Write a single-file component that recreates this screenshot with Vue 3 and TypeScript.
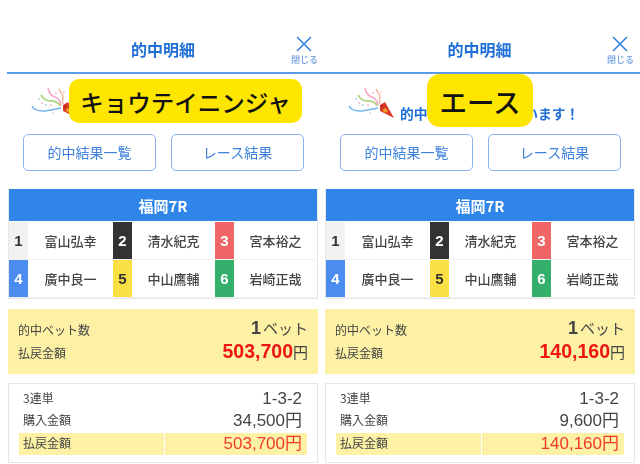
<script setup lang="ts">
interface IRacer {
  no: number
  name: string
}

interface IPanel {
  label: string
  labelClass: string
  stake: string
  payout: string
}

const racers: IRacer[] = [
  { no: 1, name: '富山弘幸' },
  { no: 2, name: '清水紀克' },
  { no: 3, name: '宮本裕之' },
  { no: 4, name: '廣中良一' },
  { no: 5, name: '中山鷹輔' },
  { no: 6, name: '岩崎正哉' },
]

const panels: IPanel[] = [
  { label: 'キョウテイニンジャ', labelClass: 'label-wide', stake: '34,500', payout: '503,700' },
  { label: 'エース', labelClass: 'label-short', stake: '9,600', payout: '140,160' },
]
</script>

<template>
  <div class="page">
    <section v-for="panel in panels" :key="panel.label" class="panel">
      <header class="top">
        <h1 class="title">的中明細</h1>
        <div class="close">
          <svg width="16" height="16" viewBox="0 0 16 16">
            <path d="M1 1 15 15M15 1 1 15" stroke="#2f7fe0" stroke-width="1.5" fill="none" />
          </svg>
          <span>閉じる</span>
        </div>
      </header>

      <div class="congrats">
        <svg class="popper" width="56" height="38" viewBox="0 0 56 38">
          <path d="M5 22c2 4 6 5 11 5s12-2 18-3" stroke="#72b4ee" stroke-width="1.6" fill="none" />
          <path d="M14 11c2 4 5 6 10 6s7 2 10 5" stroke="#b4d88a" stroke-width="1.8" fill="none" />
          <path d="M21 4c1 5 3 8 7 9s5 4 6 8" stroke="#f4a6c6" stroke-width="1.6" fill="none" />
          <path d="M32 5c1 3 4 5 4 8s-1 4 0 7" stroke="#f3b49a" stroke-width="1.4" fill="none" />
          <g fill="#f2b0c4">
            <circle cx="15" cy="19" r="0.9" />
            <circle cx="24" cy="21" r="0.9" />
            <circle cx="29" cy="9" r="0.9" />
            <circle cx="37" cy="8" r="0.8" />
          </g>
          <g fill="#9fd0ee">
            <circle cx="12" cy="15" r="0.9" />
            <circle cx="19" cy="21" r="0.9" />
            <circle cx="26" cy="29" r="0.8" />
          </g>
          <path d="M36 21 41 18 50 34 36 27Z" fill="#dc3a26" />
          <path d="M40 24 44 26 42 29 39 27Z" fill="#f0a030" />
          <path d="M37 22 39 21 38 25Z" fill="#a81e1e" />
        </svg>
        <span class="congrats-text">的中おめでとうございます！</span>
      </div>

      <div class="actions">
        <button class="link-button">的中結果一覧</button>
        <button class="link-button">レース結果</button>
      </div>

      <div class="race">
        <div class="race-head">福岡7R</div>
        <div class="racers">
          <div v-for="racer in racers" :key="racer.no" class="racer">
            <span :class="['num', `num-${racer.no}`]">{{ racer.no }}</span>
            <span class="name">{{ racer.name }}</span>
          </div>
        </div>
      </div>

      <div class="summary">
        <div class="row">
          <span>的中ベット数</span>
          <span class="big"><b class="count">1</b>ベット</span>
        </div>
        <div class="row">
          <span>払戻金額</span>
          <span class="big"><b class="red">{{ panel.payout }}</b>円</span>
        </div>
      </div>

      <div class="detail">
        <div class="line">
          <span class="line-name">3連単</span>
          <span class="value">1-3-2</span>
        </div>
        <div class="line">
          <span class="line-name">購入金額</span>
          <span class="value">{{ panel.stake }}円</span>
        </div>
        <div class="line hit">
          <span class="hit-name">払戻金額</span>
          <span class="value">{{ panel.payout }}円</span>
        </div>
      </div>

      <div :class="['label', panel.labelClass]">{{ panel.label }}</div>
    </section>
  </div>
</template>

<style>
html,
body {
  margin: 0;
  background: #fff;
}
</style>

<style scoped>
.page {
  display: grid;
  grid-template-columns: 317px 323px;
  width: 640px;
  height: 464px;
  overflow: hidden;
  font-family: 'Noto Sans CJK JP', 'Liberation Sans', sans-serif;
  color: #444;
}

.panel {
  position: relative;
  width: 310px;
  padding-left: 8px;
}

.top,
.congrats,
.actions,
.race,
.summary,
.detail {
  filter: blur(0.4px);
}

.top {
  position: relative;
  height: 74px;
  margin-left: -1px;
  width: 312px;
  box-sizing: border-box;
  border-bottom: 2px solid #5b9be8;
  display: flex;
  justify-content: center;
}

.panel:last-child .top {
  margin-left: -6px;
  width: 321px;
}

.title {
  margin: 38px 0 0;
  font-size: 16px;
  line-height: 22px;
  font-weight: 700;
  color: #1f6fd6;
}

.close {
  position: absolute;
  right: 1px;
  top: 36px;
  display: flex;
  flex-direction: column;
  align-items: center;
  font-size: 9px;
  line-height: 11px;
  font-weight: 500;
  color: #6f9fdc;
}

.panel:last-child .close {
  right: 6px;
}

.close span {
  margin-top: 2px;
}

.congrats {
  height: 60px;
  display: flex;
  align-items: flex-start;
  padding-left: 19px;
}

.popper {
  margin-top: 10px;
  flex: none;
}

.congrats-text {
  margin-top: 29px;
  font-size: 13.8px;
  line-height: 20px;
  font-weight: 700;
  color: #1f6fd6;
  white-space: nowrap;
}

.actions {
  display: flex;
  gap: 15px;
  padding-left: 15px;
}

.link-button {
  width: 133px;
  height: 37px;
  padding: 0 0 2px;
  box-sizing: border-box;
  background: #fff;
  border: 1.5px solid #8ab4ee;
  border-radius: 5px;
  font: inherit;
  font-size: 14px;
  color: #3f82dc;
}

.race {
  margin-top: 18px;
  border: 1px solid #e6e6e6;
  border-top: 0;
}

.race-head {
  height: 32px;
  background: #2f85e8;
  color: #fff;
  font-size: 15px;
  font-weight: 700;
  line-height: 34px;
  text-align: center;
}

.racers {
  display: grid;
  grid-template-columns: 104px 102px 1fr;
  grid-auto-rows: 38px;
  padding-top: 1px;
}

.racer {
  display: flex;
  align-items: stretch;
  border-bottom: 1px solid #f1f1f1;
}

.num {
  flex: none;
  width: 19px;
  text-align: center;
  font-size: 15px;
  line-height: 38px;
  font-weight: 700;
  font-family: 'Liberation Sans', sans-serif;
  color: #fff;
}

.num-1 {
  background: #f2f2f2;
  color: #333;
}

.num-2 {
  background: #333;
}

.num-3 {
  background: #f06565;
}

.num-4 {
  background: #4a8cf0;
}

.num-5 {
  background: #fae044;
  color: #333;
}

.num-6 {
  background: #35b06c;
}

.name {
  flex: 1;
  text-align: center;
  font-size: 13px;
  line-height: 38px;
  font-weight: 500;
}

.summary {
  margin-top: 10px;
  height: 65px;
  box-sizing: border-box;
  padding: 9px 10px 0;
  background: #fcf1a5;
  font-size: 12px;
}

.row {
  display: flex;
  justify-content: space-between;
  align-items: center;
  height: 23px;
}

.big {
  margin-bottom: 3px;
  font-size: 15px;
  line-height: 23px;
}

.big b {
  font-family: 'Liberation Sans', sans-serif;
  font-weight: 700;
}

.big .count {
  font-size: 18px;
  margin-right: 2px;
}

.big .red {
  font-size: 19.5px;
  color: #f01414;
}

.detail {
  margin-top: 9px;
  height: 80px;
  box-sizing: border-box;
  padding: 4px 10px 0;
  border: 1px solid #e6e6e6;
  font-size: 12px;
}

.line {
  display: flex;
  justify-content: space-between;
  align-items: center;
  height: 22px;
  padding: 0 5px 0 4px;
}

.line-name {
  margin-bottom: 3px;
}

.hit {
  margin-top: 1px;
  padding: 0;
  display: grid;
  grid-template-columns: 145px 1fr;
  gap: 1px;
}

.hit-name {
  padding: 0 0 2px 4px;
  height: 20px;
  line-height: 20px;
  background: #fcf1a5;
}

.value {
  font-size: 17px;
  line-height: 22px;
  font-family: 'Liberation Sans', 'Noto Sans CJK JP', sans-serif;
}

.hit .value {
  padding-right: 5px;
  text-align: right;
  background: #fcf1a5;
  color: #f23a2e;
}

.label {
  position: absolute;
  display: flex;
  align-items: center;
  justify-content: center;
  background: #ffe600;
  color: #111;
  font-weight: 500;
  white-space: nowrap;
}

.label-wide {
  left: 69px;
  top: 79px;
  width: 233px;
  height: 42px;
  padding-top: 2px;
  border-radius: 10px;
  font-size: 23.5px;
}

.label-short {
  left: 110px;
  top: 74px;
  width: 106px;
  height: 53px;
  border-radius: 13px;
  font-size: 27.5px;
}
</style>
